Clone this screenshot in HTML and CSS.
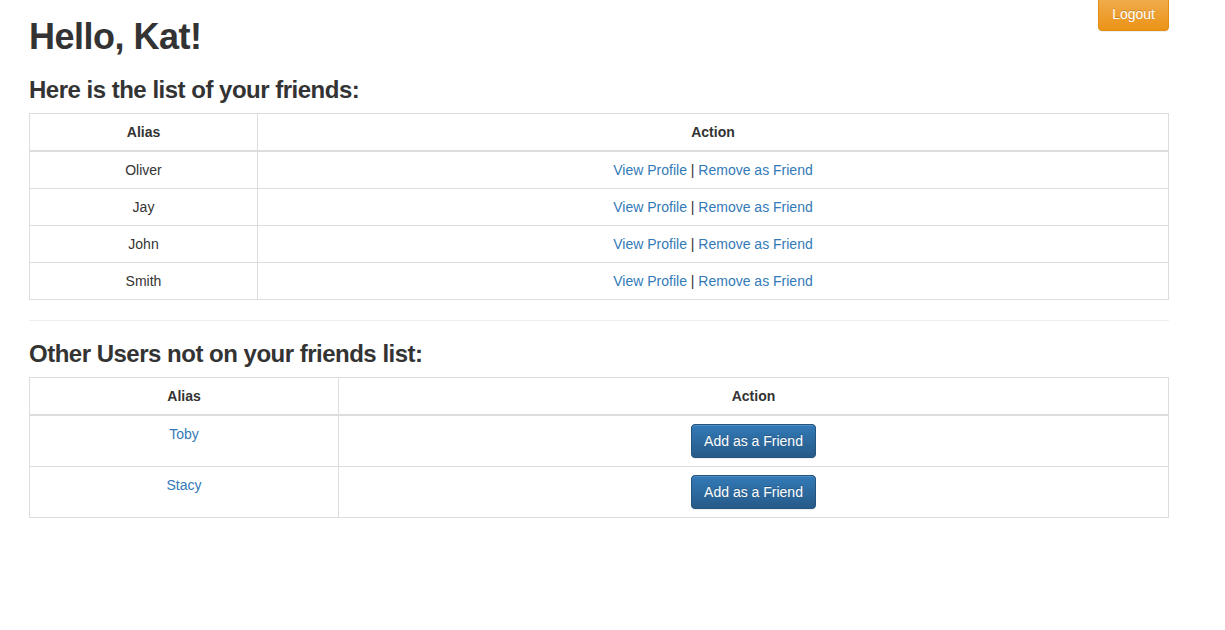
FILE: index.html
```html
<!DOCTYPE html>
<html>
<head>
<meta charset="utf-8">
<title>Friends</title>
<link rel="stylesheet" href="styles.css">
</head>
<body>
<div class="container">
  <a class="btn btn-warning logout" href="#">Logout</a>
  <h1>Hello, Kat!</h1>
  <h3>Here is the list of your friends:</h3>
  <table class="table friends">
    <thead>
      <tr><th class="col-alias">Alias</th><th>Action</th></tr>
    </thead>
    <tbody>
      <tr><td>Oliver</td><td><a href="#">View Profile</a> | <a href="#">Remove as Friend</a></td></tr>
      <tr><td>Jay</td><td><a href="#">View Profile</a> | <a href="#">Remove as Friend</a></td></tr>
      <tr><td>John</td><td><a href="#">View Profile</a> | <a href="#">Remove as Friend</a></td></tr>
      <tr><td>Smith</td><td><a href="#">View Profile</a> | <a href="#">Remove as Friend</a></td></tr>
    </tbody>
  </table>
  <hr>
  <h3>Other Users not on your friends list:</h3>
  <table class="table others">
    <thead>
      <tr><th class="col-alias2">Alias</th><th>Action</th></tr>
    </thead>
    <tbody>
      <tr><td><a href="#">Toby</a></td><td><button class="btn btn-primary">Add as a Friend</button></td></tr>
      <tr><td><a href="#">Stacy</a></td><td><button class="btn btn-primary">Add as a Friend</button></td></tr>
    </tbody>
  </table>
</div>
</body>
</html>
```
FILE: styles.css
```css
* { box-sizing: border-box; }
html, body { margin: 0; padding: 0; background: #fff; }
body {
  font-family: "Liberation Sans", Arial, Helvetica, sans-serif;
  font-size: 14px;
  line-height: 1.42857143;
  color: #333;
}
.container {
  display: flow-root;
  width: 1140px;
  margin-left: 29px;
  margin-top: -3px;
}
a { color: #337ab7; text-decoration: none; }
h1, h3 {
  font-family: "Liberation Sans", Arial, sans-serif;
  font-weight: 700;
  letter-spacing: -0.5px;
  line-height: 1.1;
  color: #333;
  margin-top: 20px;
  margin-bottom: 10px;
}
h1 { font-size: 36px; }
h3 { font-size: 24px; }
hr {
  margin: 20px 0;
  border: 0;
  border-top: 1px solid #eee;
}
.table {
  width: 100%;
  border-collapse: collapse;
  border-spacing: 0;
  border: 1px solid #ddd;
  margin-bottom: 20px;
}
.table th, .table td {
  padding: 8px;
  line-height: 20px;
  text-align: center;
  vertical-align: top;
  border: 1px solid #ddd;
}
.table thead th {
  vertical-align: bottom;
  border-bottom: 2px solid #ddd;
  font-weight: bold;
}
.col-alias { width: 228px; }
.col-alias2 { width: 309px; }
.btn {
  display: inline-block;
  padding: 6px 12px;
  margin: 0;
  font-family: inherit;
  font-size: 14px;
  line-height: 20px;
  text-align: center;
  white-space: nowrap;
  vertical-align: middle;
  cursor: pointer;
  border: 1px solid transparent;
  border-radius: 4px;
  color: #fff;
  text-shadow: 0 -1px 0 rgba(0,0,0,.2);
  box-shadow: inset 0 1px 0 rgba(255,255,255,.15), 0 1px 1px rgba(0,0,0,.075);
}
.btn-primary {
  background-color: #265a88;
  background-image: linear-gradient(to bottom, #337ab7 0, #265a88 100%);
  border-color: #245580;
}
.btn-warning {
  background-color: #eb9316;
  background-image: linear-gradient(to bottom, #f0ad4e 0, #eb9316 100%);
  border-color: #e38d13;
}
.logout { float: right; padding-left: 13px; padding-right: 13px; }
```
